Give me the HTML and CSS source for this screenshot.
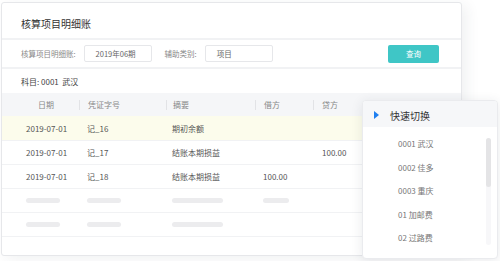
FILE: index.html
```html
<!DOCTYPE html>
<html lang="zh">
<head>
<meta charset="utf-8">
<link rel="stylesheet" href="styles.css">
</head>
<body>
<div class="stage">
  <div class="card">
    <div class="title-bar">核算项目明细账</div>
    <div class="filter-bar">
      <span class="label">核算项目明细账:</span>
      <span class="input">2019年06期</span>
      <span class="label label-2">辅助类别:</span>
      <span class="input">项目</span>
      <span class="btn">查询</span>
    </div>
    <div class="subject">科目: 0001&nbsp; 武汉</div>
    <div class="table">
      <div class="row head">
        <span class="hc c1">日期</span>
        <span class="hc c2">凭证字号</span>
        <span class="hc c3">摘要</span>
        <span class="hc c4">借方</span>
        <span class="hc c5">贷方</span>
      </div>
      <div class="row hl">
        <span class="cell c1">2019-07-01</span>
        <span class="cell c2">记_16</span>
        <span class="cell c3">期初余额</span>
        <span class="cell c4"></span>
        <span class="cell c5"></span>
      </div>
      <div class="row">
        <span class="cell c1">2019-07-01</span>
        <span class="cell c2">记_17</span>
        <span class="cell c3">结账本期损益</span>
        <span class="cell c4"></span>
        <span class="cell c5">100.00</span>
      </div>
      <div class="row">
        <span class="cell c1">2019-07-01</span>
        <span class="cell c2">记_18</span>
        <span class="cell c3">结账本期损益</span>
        <span class="cell c4">100.00</span>
        <span class="cell c5"></span>
      </div>
      <div class="row">
        <span class="cell c1"><i class="bar w34"></i></span>
        <span class="cell c2"><i class="bar w34"></i></span>
        <span class="cell c3"><i class="bar w51"></i></span>
        <span class="cell c4"><i class="bar w26"></i></span>
        <span class="cell c5"></span>
      </div>
      <div class="row">
        <span class="cell c1"><i class="bar w34"></i></span>
        <span class="cell c2"><i class="bar w34"></i></span>
        <span class="cell c3"><i class="bar w51"></i></span>
        <span class="cell c4"></span>
        <span class="cell c5"></span>
      </div>
    </div>
  </div>

  <div class="popup">
    <div class="pop-head">
      <svg class="tri" width="5" height="8" viewBox="0 0 5 8"><path d="M0 0 L5 4 L0 8 Z" fill="#1f7ff0"/></svg>
      <span>快速切换</span>
    </div>
    <div class="pop-body">
      <ul class="pop-list">
        <li>0001 武汉</li>
        <li>0002 佳多</li>
        <li>0003 重庆</li>
        <li>01 加邮费</li>
        <li>02 过路费</li>
      </ul>
      <div class="scroll"><div class="thumb"></div></div>
    </div>
  </div>
</div>
</body>
</html>
```

FILE: styles.css
```css
* { box-sizing: border-box; margin: 0; padding: 0; }
html, body { width: 500px; height: 261px; background: #fff; overflow: hidden; }
body {
  font-family: "Noto Sans CJK SC", "Noto Sans", sans-serif;
  font-size: 8px;
  color: #555;
}
.stage { position: relative; width: 500px; height: 261px; padding: 2px 0 0 1px; }

.card {
  width: 461px;
  height: 254px;
  border: 1px solid #e6e7ea;
  border-radius: 3px;
  background: #fff;
  box-shadow: 5px 3px 14px rgba(40, 50, 70, 0.07);
  display: flex;
  flex-direction: column;
}

.title-bar {
  height: 37px;
  padding-left: 19px;
  padding-top: 5px;
  display: flex;
  align-items: center;
  font-size: 10px;
  color: #333;
  border-bottom: 2px solid #f1f2f4;
}

.filter-bar {
  height: 29px;
  display: flex;
  align-items: center;
  padding-left: 19px;
  padding-right: 22px;
  border-bottom: 2px solid #f1f2f4;
}
.label { color: #888; font-size: 7.5px; }
.label-2 { margin-left: 13px; }
.input {
  margin-left: 8px;
  width: 68px;
  height: 17px;
  border: 1px solid #e6e7ea;
  border-radius: 2px;
  display: flex;
  align-items: center;
  padding-left: 11px;
  color: #666;
  font-size: 7.5px;
}
.btn {
  margin-left: auto;
  width: 51px;
  height: 18px;
  border-radius: 2px;
  background: #3fc6c6;
  color: #fff;
  display: flex;
  align-items: center;
  justify-content: center;
  font-size: 7.5px;
}

.subject {
  height: 24px;
  display: flex;
  align-items: center;
  padding-left: 19px;
  color: #444;
}

.table { display: flex; flex-direction: column; }
.row {
  display: grid;
  grid-template-columns: 77px 87px 89px 58px 1fr;
  height: 24px;
  border-bottom: 1px solid #f1f2f4;
  align-items: center;
}
.row.head {
  height: 23px;
  background: #f5f6f8;
  border-bottom: none;
  color: #888;
}
.row.hl { height: 25px; background: #fcfcec; }

.hc { height: 10px; line-height: 10px; }
.hc.c1 { padding-left: 36px; }
.hc.c2, .hc.c3, .hc.c4, .hc.c5 { border-left: 1px solid #e2e3e6; }
.hc.c2 { padding-left: 8px; }
.hc.c3 { padding-left: 6px; }
.hc.c4 { padding-left: 8px; }
.hc.c5 { padding-left: 8px; }

.cell { display: flex; align-items: center; white-space: nowrap; }
.cell.c1 { padding-left: 24px; }
.cell.c2 { padding-left: 8px; }
.cell.c3 { padding-left: 6px; }
.cell.c4 { padding-left: 8px; }
.cell.c5 { padding-left: 9px; }

.bar { display: block; height: 5px; border-radius: 3px; background: #ececee; }
.w34 { width: 34px; }
.w51 { width: 51px; }
.w26 { width: 26px; }

.popup {
  position: absolute;
  left: 362px;
  top: 100px;
  width: 136px;
  height: 159px;
  background: #fff;
  border: 1px solid #eaebee;
  border-radius: 4px;
  box-shadow: 0 2px 12px rgba(40, 50, 70, 0.1);
  display: flex;
  flex-direction: column;
  overflow: hidden;
}
.pop-head {
  flex: none;
  height: 26px;
  padding-top: 2px;
  background: #f6f7f9;
  display: flex;
  align-items: center;
  padding-left: 11px;
  font-size: 10px;
  color: #333;
}
.pop-head .tri { margin-right: 11px; }
.pop-body {
  flex: 1;
  display: flex;
  align-items: flex-start;
  padding: 9px 6px 0 0;
}
.pop-list {
  list-style: none;
  flex: 1;
  padding-left: 35px;
  color: #777;
}
.pop-list li { height: 23.5px; line-height: 15px; }
.scroll {
  flex: none;
  margin-top: 2px;
  width: 5px;
  height: 107px;
  border-radius: 3px;
  background: #f7f7f9;
}
.thumb { width: 5px; height: 49px; border-radius: 3px; background: #e4e4e6; }
```
